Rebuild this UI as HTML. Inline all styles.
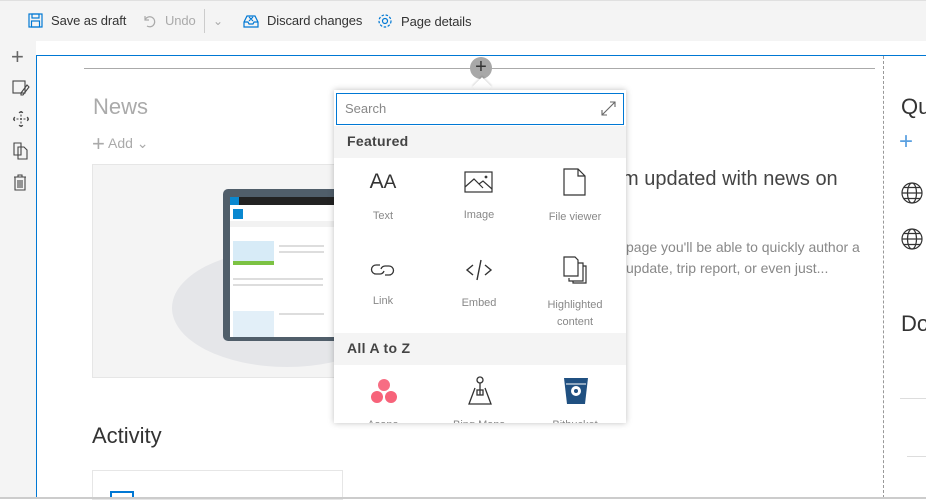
<!DOCTYPE html>
<html><head><meta charset="utf-8"><style>
*{box-sizing:border-box;margin:0;padding:0}
body{width:926px;height:499px;overflow:hidden;background:#fff;font-family:"Segoe UI","Liberation Sans",sans-serif;position:relative;color:#333}
.abs{position:absolute}
.tb{left:0;top:0;width:926px;height:41px;background:#f4f4f4;border-top:1px solid #e0e0e0}
.tbi{top:13px;font-size:13px;color:#333;display:flex;align-items:center;gap:8px;letter-spacing:-.1px}
.rail{left:0;top:41px;width:36px;height:458px;background:#f4f4f4}
.frame{left:36px;top:55px;width:890px;height:443px;border:1px solid #0078d4;border-right:none}
.pop{left:334px;top:90px;width:292px;height:333px;background:#fff;box-shadow:0 0 6px rgba(0,0,0,.25);overflow:hidden}
.hdr{position:absolute;left:0;width:292px;height:32px;background:#f4f4f4;font-size:14px;font-weight:bold;color:#444;padding:7px 13px;letter-spacing:.3px}
.cell{position:absolute;width:96px;text-align:center;font-size:11px;color:#888;line-height:17px}
.cell svg{display:block;margin:0 auto 13px}
</style></head><body>
<div class="abs tb"></div>
<div class="abs tbi" style="left:28px"><svg width="15" height="15" viewBox="0 0 15 15" fill="none" stroke="#0078d4" stroke-width="1.2"><rect x="1" y="1" width="13" height="13"/><rect x="4" y="1" width="7" height="4"/><rect x="3.5" y="8" width="8" height="6"/></svg>Save as draft</div>
<div class="abs tbi" style="left:143px;color:#aaa"><svg width="14" height="14" viewBox="0 0 14 14" fill="none" stroke="#aaa" stroke-width="1.2"><path d="M2 2v4h4M2 6a5 5 0 1 1 2 6"/></svg>Undo</div>
<div class="abs" style="left:204px;top:9px;width:1px;height:24px;background:#ccc"></div>
<div class="abs" style="left:213px;top:14px;color:#aaa;font-size:12px">&#8964;</div>
<div class="abs tbi" style="left:243px"><svg width="16" height="14" viewBox="0 0 16 14" fill="none" stroke="#0078d4" stroke-width="1.2"><path d="M1 8l3-6h8l3 6v5H1zM1 8h4l1 2h4l1-2h4M6 3l4 4M10 3l-4 4"/></svg>Discard changes</div>
<div class="abs tbi" style="left:377px"><svg width="16" height="16" viewBox="0 0 16 16" fill="none" stroke="#0078d4" stroke-width="1.2"><circle cx="8" cy="8" r="2.5"/><circle cx="8" cy="8" r="6" stroke-dasharray="2.5 1.6"/></svg>Page details</div>
<div class="abs rail"></div>
<div class="abs" style="left:11px;top:44px;font-size:22px;color:#666;font-weight:200">+</div>
<svg class="abs" style="left:12px;top:80px" width="18" height="16" viewBox="0 0 18 16" fill="none" stroke="#444" stroke-width="1.1"><rect x="1" y="1" width="12" height="12"/><path d="M9 13l6-8 2 2-6 8-2 0z"/></svg>
<svg class="abs" style="left:12px;top:110px" width="18" height="18" viewBox="0 0 18 18" fill="none" stroke="#444" stroke-width="1.1"><path d="M9 1v16M1 9h16M7 3l2-2 2 2M7 15l2 2 2-2M3 7l-2 2 2 2M15 7l2 2-2 2" stroke-dasharray="2 1.5"/></svg>
<svg class="abs" style="left:13px;top:142px" width="15" height="18" viewBox="0 0 15 18" fill="none" stroke="#444" stroke-width="1.1"><path d="M1 1h7v12H1zM5 5h6l3 3v9H5z"/></svg>
<svg class="abs" style="left:13px;top:174px" width="14" height="17" viewBox="0 0 14 17" fill="none" stroke="#444" stroke-width="1.1"><path d="M1 3h12M5 3V1h4v2M2 3v13h10V3M5 6v8M7 6v8M9 6v8"/></svg>
<div class="abs frame"></div>
<div class="abs" style="left:84px;top:68px;width:791px;height:1px;background:#aaa"></div>
<div class="abs" style="left:470px;top:57px;width:22px;height:22px;border-radius:50%;background:#a8a8a8;color:#333;font-size:20px;line-height:20px;text-align:center">+</div>
<div class="abs" style="left:883px;top:56px;width:0;height:442px;border-left:1px dashed #999"></div>
<div class="abs" style="left:93px;top:94px;font-size:22px;color:#aaa;font-weight:300">News</div>
<div class="abs" style="left:92px;top:131px;font-size:14px;color:#aaa"><span style="font-size:22px;font-weight:200;vertical-align:-3px">+</span> Add &#8964;</div>
<div class="abs" style="left:92px;top:164px;width:260px;height:214px;background:#f4f4f4;border:1px solid #e6e6e6;overflow:hidden">
<div class="abs" style="left:79px;top:84px;width:230px;height:118px;border-radius:50%;background:#e5e6e9"></div>
<div class="abs" style="left:130px;top:24px;width:130px;height:152px;background:#505e6a;border-radius:5px"></div>
<div class="abs" style="left:137px;top:32px;width:120px;height:140px;background:#fff"></div>
<div class="abs" style="left:137px;top:32px;width:120px;height:8px;background:#222"></div>
<div class="abs" style="left:137px;top:32px;width:9px;height:8px;background:#0a88d0"></div>
<div class="abs" style="left:140px;top:44px;width:10px;height:10px;background:#0a88d0"></div>
<div class="abs" style="left:137px;top:56px;width:120px;height:6px;background:#f2f2f2"></div>
<div class="abs" style="left:140px;top:76px;width:41px;height:24px;background:#d7ebf7"></div>
<div class="abs" style="left:140px;top:96px;width:41px;height:4px;background:#7cc243"></div>
<div class="abs" style="left:186px;top:80px;width:45px;height:2px;background:#ddd"></div>
<div class="abs" style="left:186px;top:86px;width:45px;height:2px;background:#ddd"></div>
<div class="abs" style="left:140px;top:113px;width:90px;height:2px;background:#ddd"></div>
<div class="abs" style="left:140px;top:119px;width:90px;height:2px;background:#ddd"></div>
<div class="abs" style="left:140px;top:146px;width:41px;height:26px;background:#e2eff8"></div>
<div class="abs" style="left:186px;top:148px;width:45px;height:2px;background:#ddd"></div>
</div>
<div class="abs" style="left:622px;top:168px;font-size:20px;color:#444;font-weight:300">m updated with news on</div>
<div class="abs" style="left:626px;top:237px;font-size:14px;color:#888;line-height:21px">page you'll be able to quickly author a<br>update, trip report, or even just...</div>
<div class="abs" style="left:92px;top:423px;font-size:22px;color:#333;font-weight:300">Activity</div>
<div class="abs" style="left:92px;top:470px;width:251px;height:30px;border:1px solid #e6e6e6"></div>
<div class="abs" style="left:110px;top:491px;width:24px;height:8px;border:2px solid #0078d4;border-bottom:none"></div>
<div class="abs" style="left:901px;top:94px;font-size:22px;color:#333;font-weight:300">Qu</div>
<div class="abs" style="left:899px;top:128px;font-size:24px;color:#5aa0e0;font-weight:200">+</div>
<svg class="abs" style="left:901px;top:182px" width="22" height="22" viewBox="0 0 22 22" fill="none" stroke="#333" stroke-width="1.2"><circle cx="11" cy="11" r="10"/><ellipse cx="11" cy="11" rx="4.5" ry="10"/><path d="M1 11h20M3 5.5h16M3 16.5h16"/></svg>
<svg class="abs" style="left:901px;top:228px" width="22" height="22" viewBox="0 0 22 22" fill="none" stroke="#333" stroke-width="1.2"><circle cx="11" cy="11" r="10"/><ellipse cx="11" cy="11" rx="4.5" ry="10"/><path d="M1 11h20M3 5.5h16M3 16.5h16"/></svg>
<div class="abs" style="left:901px;top:311px;font-size:22px;color:#333;font-weight:300">Do</div>
<div class="abs" style="left:900px;top:398px;width:26px;height:1px;background:#ddd"></div>
<div class="abs" style="left:907px;top:456px;width:19px;height:1px;background:#ddd"></div>
<div class="abs" style="left:0;top:497px;width:926px;height:2px;background:#ccc"></div>
<div class="abs" style="left:475px;top:80px;width:14px;height:14px;background:#fff;transform:rotate(45deg);box-shadow:-1px -1px 2px rgba(0,0,0,.15)"></div>
<div class="abs pop">
<div class="abs" style="left:2px;top:3px;width:288px;height:32px;border:1px solid #0078d4;font-size:13px;color:#888;padding:7px 8px">Search</div>
<svg class="abs" style="left:267px;top:11px" width="15" height="15" viewBox="0 0 15 15" fill="none" stroke="#666" stroke-width="1.1"><path d="M1 14L14 1M1 9v5h5M9 1h5v5"/></svg>
<div class="hdr" style="top:36px">Featured</div>
<div class="cell" style="left:1px;top:80px"><div style="font-size:21px;color:#333;height:26px;line-height:24px;margin-bottom:12px">A<span style="font-size:19px">A</span></div>Text</div>
<div class="cell" style="left:97px;top:80px"><svg width="30" height="24" viewBox="0 0 30 24" fill="none" stroke="#333" stroke-width="1.2"><rect x="1" y="2" width="27" height="20"/><path d="M1 17l9-8 9 9M15 14l4-3 9 8"/><circle cx="22" cy="7" r=".8"/></svg>Image</div>
<div class="cell" style="left:193px;top:78px"><svg width="24" height="28" viewBox="0 0 24 28" fill="none" stroke="#333" stroke-width="1.2"><path d="M1 1h14l7 7v19H1zM15 1v7h7"/></svg>File viewer</div>
<div class="cell" style="left:1px;top:170px"><svg width="30" height="20" viewBox="0 0 30 20" fill="none" stroke="#333" stroke-width="1.3"><path d="M12 5H8a4.5 4.5 0 0 0 0 9h4a4.5 4.5 0 0 0 4-3M17 15h4a4.5 4.5 0 0 0 0-9h-4a4.5 4.5 0 0 0-4 3"/></svg>Link</div>
<div class="cell" style="left:97px;top:168px"><svg width="28" height="24" viewBox="0 0 28 24" fill="none" stroke="#333" stroke-width="1.4"><path d="M8 7l-6 5 6 5M20 7l6 5-6 5M16 2l-4 20"/></svg>Embed</div>
<div class="cell" style="left:193px;top:166px"><svg width="24" height="28" viewBox="0 0 24 28" fill="none" stroke="#333" stroke-width="1.2"><path d="M1 1h11l3 3v16H1zM6 22v3h14V7h-5M10 25v2h13V10h-3"/></svg>Highlighted<br>content</div>
<div class="hdr" style="top:243px">All A to Z</div>
<svg class="abs" style="left:36px;top:288px" width="28" height="26" viewBox="0 0 28 26"><circle cx="14" cy="7" r="6" fill="#f76d83"/><circle cx="7" cy="19" r="6" fill="#f7637a"/><circle cx="21" cy="19" r="6" fill="#f7637a"/></svg>
<svg class="abs" style="left:133px;top:286px" width="26" height="30" viewBox="0 0 26 30" fill="none" stroke="#333" stroke-width="1.3"><circle cx="13" cy="4" r="3"/><path d="M13 7v12M8 12l-6 16h22l-6-16"/><rect x="10" y="14" width="6" height="5"/></svg>
<svg class="abs" style="left:229px;top:286px" width="26" height="30" viewBox="0 0 26 30"><path d="M1 2h24l-3 26H4z" fill="#205081"/><circle cx="13" cy="15" r="5" fill="#fff"/><circle cx="13" cy="15" r="2" fill="#205081"/><path d="M3 8h20" stroke="#fff" stroke-width="1"/></svg>
<div class="cell" style="left:1px;top:327px">Asana</div>
<div class="cell" style="left:97px;top:327px">Bing Maps</div>
<div class="cell" style="left:193px;top:327px">Bitbucket</div>
</div>
</body></html>
